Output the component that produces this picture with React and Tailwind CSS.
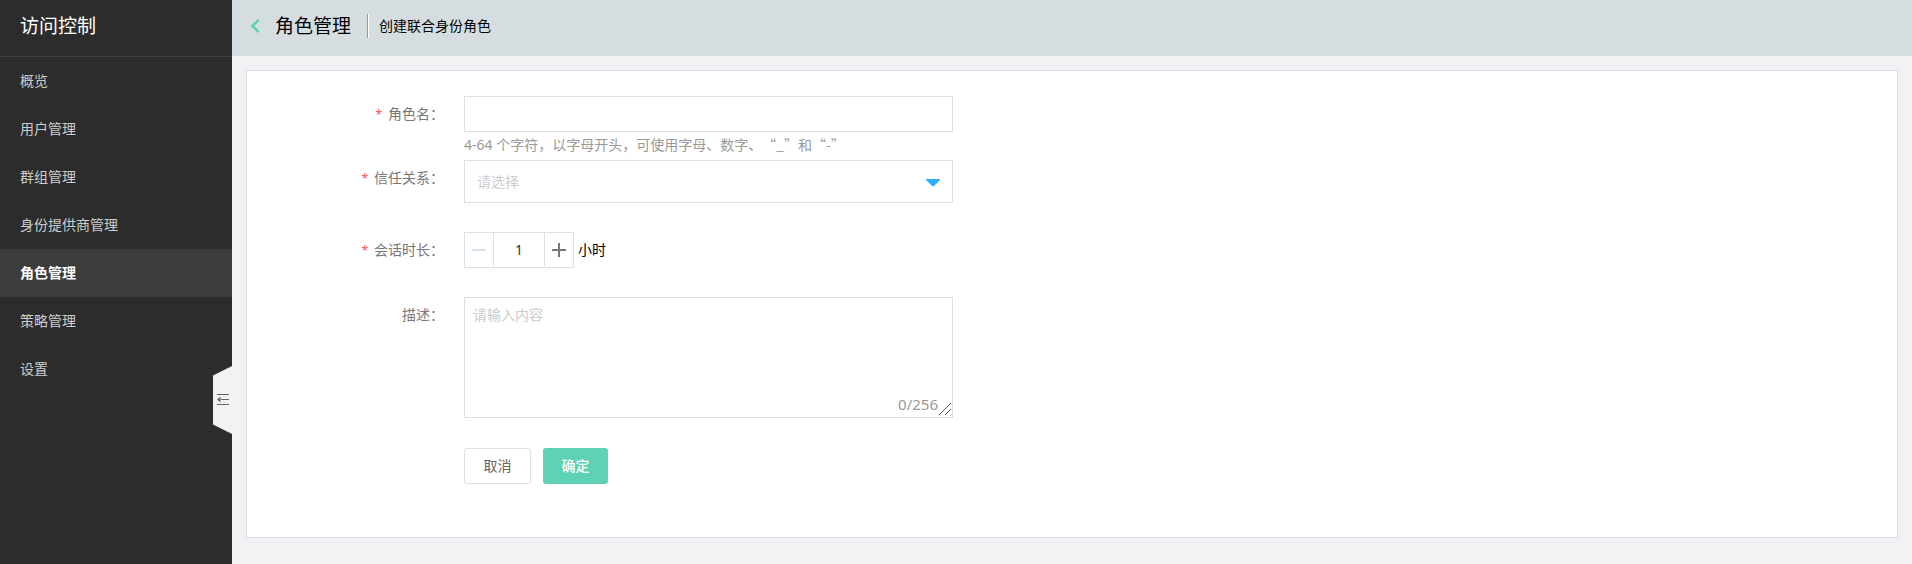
import { useState } from "react";

const menu = ["概览", "用户管理", "群组管理", "身份提供商管理", "角色管理", "策略管理", "设置"];

function Sidebar() {
  return (
    <aside className="relative w-58 shrink-0 bg-[#2c2c2c]">
      <h1 className="h-14 px-5 text-[19px] leading-[52px] text-white">访问控制</h1>
      <nav className="border-t border-[#404040]">
        {menu.map((item) => (
          <a
            key={item}
            href="#"
            className={
              item === "角色管理"
                ? "block h-12 bg-[#3c3c3c] px-5 text-sm leading-12 font-bold text-white"
                : "block h-12 px-5 text-sm leading-12 text-[#cccccc]"
            }
          >
            {item}
          </a>
        ))}
      </nav>
      <button type="button" aria-label="收起菜单" className="absolute top-[366px] right-0">
        <svg width="19" height="68" viewBox="0 0 19 68">
          <path d="M19 0 0 9.5v49L19 68z" fill="#f2f2f4" />
          <path d="M4 28.5h12M8 33.5h8M4 38.5h12" stroke="#666" strokeWidth="1" />
          <path d="M4 33.5 7.5 30.5v6z" fill="#666" />
        </svg>
      </button>
    </aside>
  );
}

function Row({ id, label, required, children }) {
  return (
    <div className="flex">
      <label htmlFor={id} className="w-[217px] shrink-0 pr-5 text-right text-sm leading-9 text-[#777777]">
        {required && <span className="mr-1.5 text-xs text-[#ff4d4f]">*</span>}
        {label}：
      </label>
      <div className="min-w-0 grow">{children}</div>
    </div>
  );
}

export default function App() {
  const [hours, setHours] = useState(1);
  const [text, setText] = useState("");
  return (
    <div className="flex min-h-screen bg-[#f2f2f4] font-['Noto_Sans','Noto_Sans_CJK_SC',sans-serif]">
      <Sidebar />
      <div className="flex min-w-0 grow flex-col">
        <header className="flex h-14 items-center bg-[#d5dde0] pb-1 pl-[18px] text-black">
          <a href="#" aria-label="返回" className="mr-[15px]">
            <svg width="10" height="14" viewBox="0 0 10 14" fill="none" stroke="#5fd1b5" strokeWidth="2.6">
              <path d="M8.6 1 2.4 7l6.2 6" />
            </svg>
          </a>
          <h2 className="text-[19px] leading-6">角色管理</h2>
          <span className="ml-4 h-6 w-[2px] border-l border-[#999999] bg-white" />
          <span className="ml-[10px] text-sm">创建联合身份角色</span>
        </header>
        <main className="mx-[14px] mt-[14px] border border-[#d9e1e8] bg-white pt-[25px] pb-[53px]">
          <form className="flex max-w-[706px] flex-col" onSubmit={(e) => e.preventDefault()}>
            <Row id="name" label="角色名" required>
              <input id="name" className="block h-9 w-full border border-[#d9e1e8] px-2 text-sm outline-none" />
              <p className="mb-1 h-6 text-sm leading-6 text-[#999999] [text-spacing-trim:space-all]">
                4-64 个字符，以字母开头，可使用字母、数字、
                <span lang="zh-CN" className="font-['Noto_Sans_CJK_SC',sans-serif]">“_”和“-”</span>
              </p>
            </Row>
            <Row id="trust" label="信任关系" required>
              <div className="relative">
                <select
                  id="trust"
                  className="block h-[43px] w-full appearance-none border border-[#d9e1e8] bg-white px-3 text-sm text-[#cccccc] outline-none"
                >
                  <option>请选择</option>
                </select>
                <svg className="pointer-events-none absolute top-[19px] right-[13px]" width="14" height="7" viewBox="0 0 14 7">
                  <path d="M0 0h14v1L8 7H6L0 1z" fill="#2db0ff" />
                </svg>
              </div>
            </Row>
            <div className="mt-[29px]">
              <Row id="hours" label="会话时长" required>
                <div className="flex items-center">
                  <div className="flex h-9 w-[110px] border border-[#d9e1e8] pb-px">
                    <button
                      type="button"
                      aria-label="减少"
                      className="flex w-7 items-center justify-center"
                      onClick={() => setHours(Math.max(1, hours - 1))}
                    >
                      <svg width="14" height="14" viewBox="0 0 14 14" stroke="#d9e1e8" strokeWidth="2">
                        <path d="M0 7h14" />
                      </svg>
                    </button>
                    <input
                      id="hours"
                      value={hours}
                      onChange={(e) => setHours(Number(e.target.value) || 1)}
                      className="w-[52px] border-x border-[#d9e1e8] text-center text-sm text-[#333333] outline-none"
                    />
                    <button
                      type="button"
                      aria-label="增加"
                      className="flex w-7 items-center justify-center"
                      onClick={() => setHours(hours + 1)}
                    >
                      <svg width="14" height="14" viewBox="0 0 14 14" stroke="#777777" strokeWidth="2">
                        <path d="M0 7h14M7 0v14" />
                      </svg>
                    </button>
                  </div>
                  <span className="ml-1 text-sm text-black">小时</span>
                </div>
              </Row>
            </div>
            <div className="mt-[29px]">
              <Row id="desc" label="描述">
                <div className="relative">
                  <textarea
                    id="desc"
                    maxLength={256}
                    value={text}
                    onChange={(e) => setText(e.target.value)}
                    placeholder="请输入内容"
                    className="block h-[121px] w-full resize-y border border-[#d9e1e8] px-2 py-[7px] text-sm outline-none placeholder:text-[#cccccc] [&::-webkit-resizer]:bg-white"
                  />
                  <span className="pointer-events-none absolute right-[15px] bottom-[2px] text-[15px] leading-6 text-[#999999]">
                    {text.length}/256
                  </span>
                  <svg
                    className="pointer-events-none absolute right-[2px] bottom-[3px]"
                    width="12"
                    height="12"
                    viewBox="0 0 12 12"
                    stroke="#555555"
                    strokeWidth="1"
                  >
                    <path d="M0 12 12 0M6 12l6-6" />
                  </svg>
                </div>
              </Row>
            </div>
            <div className="mt-[30px] flex gap-3 pl-[217px] text-sm">
              <button type="button" className="h-9 w-[67px] rounded-[3px] border border-[#d9e1e8] text-[#666666]">
                取消
              </button>
              <button type="submit" className="h-9 w-[65px] rounded-[3px] bg-[#5fd1b5] font-medium text-white">
                确定
              </button>
            </div>
          </form>
        </main>
      </div>
    </div>
  );
}
